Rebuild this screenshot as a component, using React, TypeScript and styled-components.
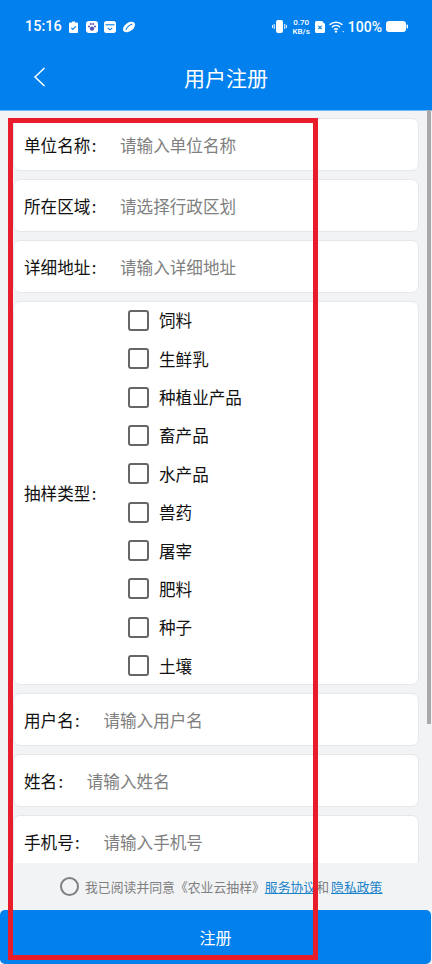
import React from 'react';
import styled, { createGlobalStyle } from 'styled-components';

const GlobalStyle = createGlobalStyle`
  html, body {
    margin: 0;
    padding: 0;
    height: 100%;
    background: #f2f3f5;
  }
  #root {
    height: 100%;
  }
  * {
    box-sizing: border-box;
  }
`;

const Page = styled.div`
  position: relative;
  width: 432px;
  height: 964px;
  display: flex;
  flex-direction: column;
  overflow: hidden;
  background: #f2f3f5;
  font-family: 'Noto Sans CJK SC', 'Noto Sans', sans-serif;
`;

const Header = styled.header`
  flex: none;
  height: 111px;
  background: #0180ee;
  color: #fff;
  border-bottom: 1px solid #6db8f5;
`;

const StatusBar = styled.div`
  height: 53px;
  padding: 0 24px 0 25px;
  display: flex;
  align-items: center;
  justify-content: space-between;
  font-family: Roboto, 'Noto Sans', sans-serif;
`;

const StatusGroup = styled.div`
  display: flex;
  align-items: center;
`;

const Clock = styled.span`
  font-size: 14.5px;
  font-weight: 500;
  margin-right: 7px;
`;

const StatusIcon = styled.svg<{ $gap?: number }>`
  display: block;
  flex: none;
  margin-right: ${({ $gap }) => $gap ?? 5}px;
`;

const Speed = styled.span`
  display: flex;
  flex-direction: column;
  align-items: center;
  font-size: 8px;
  font-weight: 500;
  line-height: 9px;
  margin-right: 5px;
`;

const Battery = styled.span`
  font-size: 14px;
  font-weight: 500;
  margin-right: 4px;
`;

const Nav = styled.div`
  height: 50px;
  padding: 0 44px 0 20px;
  display: flex;
  align-items: center;
`;

const BackButton = styled.div`
  flex: none;
  width: 44px;
  padding-right: 6px;
  display: flex;
  justify-content: center;
  margin-top: -3px;
`;

const Title = styled.div`
  flex: 1;
  text-align: center;
  font-size: 21px;
  line-height: 30px;
  margin-top: -3px;
`;

const Scroller = styled.main`
  flex: 1;
  min-height: 0;
  overflow: hidden;
  padding: 7px 13px 0;
  display: flex;
  flex-direction: column;
  gap: 8px;
`;

const Card = styled.div<{ $tall?: boolean }>`
  flex: none;
  height: ${({ $tall }) => ($tall ? '384px' : '53px')};
  padding-left: 10px;
  display: flex;
  align-items: center;
  gap: 13px;
  background: #fff;
  border: 1px solid #e6e7ea;
  border-radius: 7px;
`;

const Label = styled.span`
  flex: none;
  font-size: 16.6px;
  color: #111;
`;

const Colon = styled.span`
  display: inline-block;
  width: 1em;
  padding-left: 0.08em;
`;

const Placeholder = styled.span`
  font-size: 16.6px;
  color: #808080;
`;

const OptionList = styled.div`
  display: flex;
  flex-direction: column;
  margin-left: 8px;
`;

const Option = styled.div`
  height: 38.4px;
  display: flex;
  align-items: center;
  gap: 10px;
  font-size: 16.6px;
  color: #111;
`;

const CheckBox = styled.span`
  width: 21px;
  height: 21px;
  border: 2.5px solid #666;
  border-radius: 3px;
  background: #fff;
`;

const Footer = styled.footer`
  flex: none;
  height: 101px;
  display: flex;
  flex-direction: column;
  background: #f2f3f5;
`;

const Agreement = styled.div`
  height: 47px;
  padding-left: 60px;
  display: flex;
  align-items: center;
  font-size: 12.85px;
  color: #808080;
  white-space: nowrap;
`;

const Radio = styled.span`
  flex: none;
  width: 19px;
  height: 19px;
  margin-right: 6px;
  border: 2.5px solid #808080;
  border-radius: 50%;
`;

const AgreementLink = styled.span`
  color: #1a83c9;
  text-decoration: underline;
  & + & {
    margin-left: 2px;
  }
`;

const SubmitButton = styled.div`
  flex: 1;
  margin-right: 1px;
  display: flex;
  align-items: center;
  justify-content: center;
  background: #0180ee;
  border-radius: 5px;
  color: #fff;
  font-size: 16px;
`;

const ScrollThumb = styled.div`
  position: absolute;
  top: 110px;
  right: 1px;
  width: 4px;
  height: 614px;
  background: #a9a9ab;
`;

const Annotation = styled.div`
  position: absolute;
  left: 8px;
  top: 118px;
  width: 310px;
  height: 842px;
  border: 5px solid #e81c2a;
  pointer-events: none;
`;

const fields = [
  { label: '单位名称', hint: '请输入单位名称' },
  { label: '所在区域', hint: '请选择行政区划' },
  { label: '详细地址', hint: '请输入详细地址' },
];

const personFields = [
  { label: '用户名', hint: '请输入用户名' },
  { label: '姓名', hint: '请输入姓名' },
  { label: '手机号', hint: '请输入手机号' },
];

const sampleTypes = ['饲料', '生鲜乳', '种植业产品', '畜产品', '水产品', '兽药', '屠宰', '肥料', '种子', '土壤'];

const LeftStatusIcons = () => (
  <>
    <StatusIcon width="9" height="12" viewBox="0 0 9 12" $gap={8}>
      <path d="M1 1.5h2V.5h3v1h2a1 1 0 0 1 1 1V11a1 1 0 0 1-1 1H1a1 1 0 0 1-1-1V2.500a1 1 0 0 1 1-1z" fill="#fff" />
      <path d="M2.300 6.800l1.500 1.500 3-3" fill="none" stroke="#0180ee" strokeWidth="1.200" />
    </StatusIcon>
    <StatusIcon width="12" height="12" viewBox="0 0 12 12" $gap={6}>
      <rect width="12" height="12" rx="3" fill="#fff" />
      <circle cx="6" cy="7.600" r="2.200" fill="#5a55b8" />
      <circle cx="3" cy="5.600" r="1" fill="#5a55b8" />
      <circle cx="9" cy="5.600" r="1" fill="#5a55b8" />
      <circle cx="4.800" cy="3" r="1" fill="#5a55b8" />
      <circle cx="7.200" cy="3" r="1" fill="#5a55b8" />
    </StatusIcon>
    <StatusIcon width="12" height="12" viewBox="0 0 12 12" $gap={7}>
      <rect width="12" height="12" rx="2.500" fill="#fff" />
      <path d="M1.500 3.800h9" stroke="#0180ee" strokeWidth="1.100" />
      <path d="M3.800 6.800L6 8.800l2.200-2" fill="none" stroke="#0180ee" strokeWidth="1.100" />
    </StatusIcon>
    <StatusIcon width="12" height="12" viewBox="0 0 12 12">
      <ellipse cx="6" cy="6" rx="6.800" ry="4.200" transform="rotate(-38 6 6)" fill="#fff" />
      <path d="M2.800 8.800C4.400 5.600 6.800 3.800 9.400 3" fill="none" stroke="#0180ee" strokeWidth="1.100" />
    </StatusIcon>
  </>
);

const RightStatusIcons = () => (
  <>
    <StatusIcon width="15" height="13" viewBox="0 0 15 13">
      <rect x="4" y="0" width="7" height="13" rx="2" fill="#fff" />
      <path d="M2.200 4v5M.5 5.200v2.600M12.800 4v5M14.500 5.200v2.600" stroke="#fff" strokeWidth="1" />
    </StatusIcon>
    <Speed>
      <span>0.70</span>
      <span>KB/s</span>
    </Speed>
    <StatusIcon width="10" height="12" viewBox="0 0 10 12" $gap={4}>
      <path d="M1.500 0H7l3 3v7.500A1.500 1.500 0 0 1 8.500 12h-7A1.500 1.500 0 0 1 0 10.500v-9A1.500 1.500 0 0 1 1.500 0z" fill="#fff" />
      <path d="M3.300 4.800l3.400 3.400M6.700 4.800L3.300 8.200" stroke="#0180ee" strokeWidth="1.100" />
    </StatusIcon>
    <StatusIcon width="15" height="12" viewBox="0 0 15 12" $gap={4}>
      <g fill="none" stroke="#fff" strokeWidth="1.400">
        <path d="M.6 3.800C4.200.4 9.800.4 13.400 3.800" />
        <path d="M2.800 6.200c2.400-2.200 6-2.200 8.400 0" />
        <path d="M5 8.500c1.200-1 2.800-1 4 0" />
      </g>
      <circle cx="7" cy="10.600" r="1.200" fill="#fff" />
      <circle cx="14.200" cy="10.600" r=".7" fill="#fff" />
    </StatusIcon>
    <Battery>100%</Battery>
    <StatusIcon width="22" height="11" viewBox="0 0 22 11" $gap={0}>
      <rect width="20" height="11" rx="3" fill="#fff" />
      <rect x="20.500" y="3.500" width="1.500" height="4" rx=".7" fill="#fff" />
    </StatusIcon>
  </>
);

export default function App() {
  return (
    <Page>
      <GlobalStyle />
      <Header>
        <StatusBar>
          <StatusGroup>
            <Clock>15:16</Clock>
            <LeftStatusIcons />
          </StatusGroup>
          <StatusGroup>
            <RightStatusIcons />
          </StatusGroup>
        </StatusBar>
        <Nav>
          <BackButton>
            <svg width="13" height="20" viewBox="0 0 13 20" fill="none" stroke="#fff" strokeWidth="1.500">
              <path d="M11.500 1L2 10l9.500 9" />
            </svg>
          </BackButton>
          <Title>用户注册</Title>
        </Nav>
      </Header>

      <Scroller>
        {fields.map((field) => (
          <Card key={field.label}>
            <Label>
              {field.label}
              <Colon>:</Colon>
            </Label>
            <Placeholder>{field.hint}</Placeholder>
          </Card>
        ))}
        <Card $tall>
          <Label>
            抽样类型
            <Colon>:</Colon>
          </Label>
          <OptionList>
            {sampleTypes.map((type) => (
              <Option key={type}>
                <CheckBox />
                {type}
              </Option>
            ))}
          </OptionList>
        </Card>
        {personFields.map((field) => (
          <Card key={field.label}>
            <Label>
              {field.label}
              <Colon>:</Colon>
            </Label>
            <Placeholder>{field.hint}</Placeholder>
          </Card>
        ))}
      </Scroller>

      <Footer>
        <Agreement>
          <Radio />
          我已阅读并同意《农业云抽样》
          <AgreementLink>服务协议</AgreementLink>和<AgreementLink>隐私政策</AgreementLink>
        </Agreement>
        <SubmitButton>注册</SubmitButton>
      </Footer>

      <ScrollThumb />
      <Annotation />
    </Page>
  );
}
